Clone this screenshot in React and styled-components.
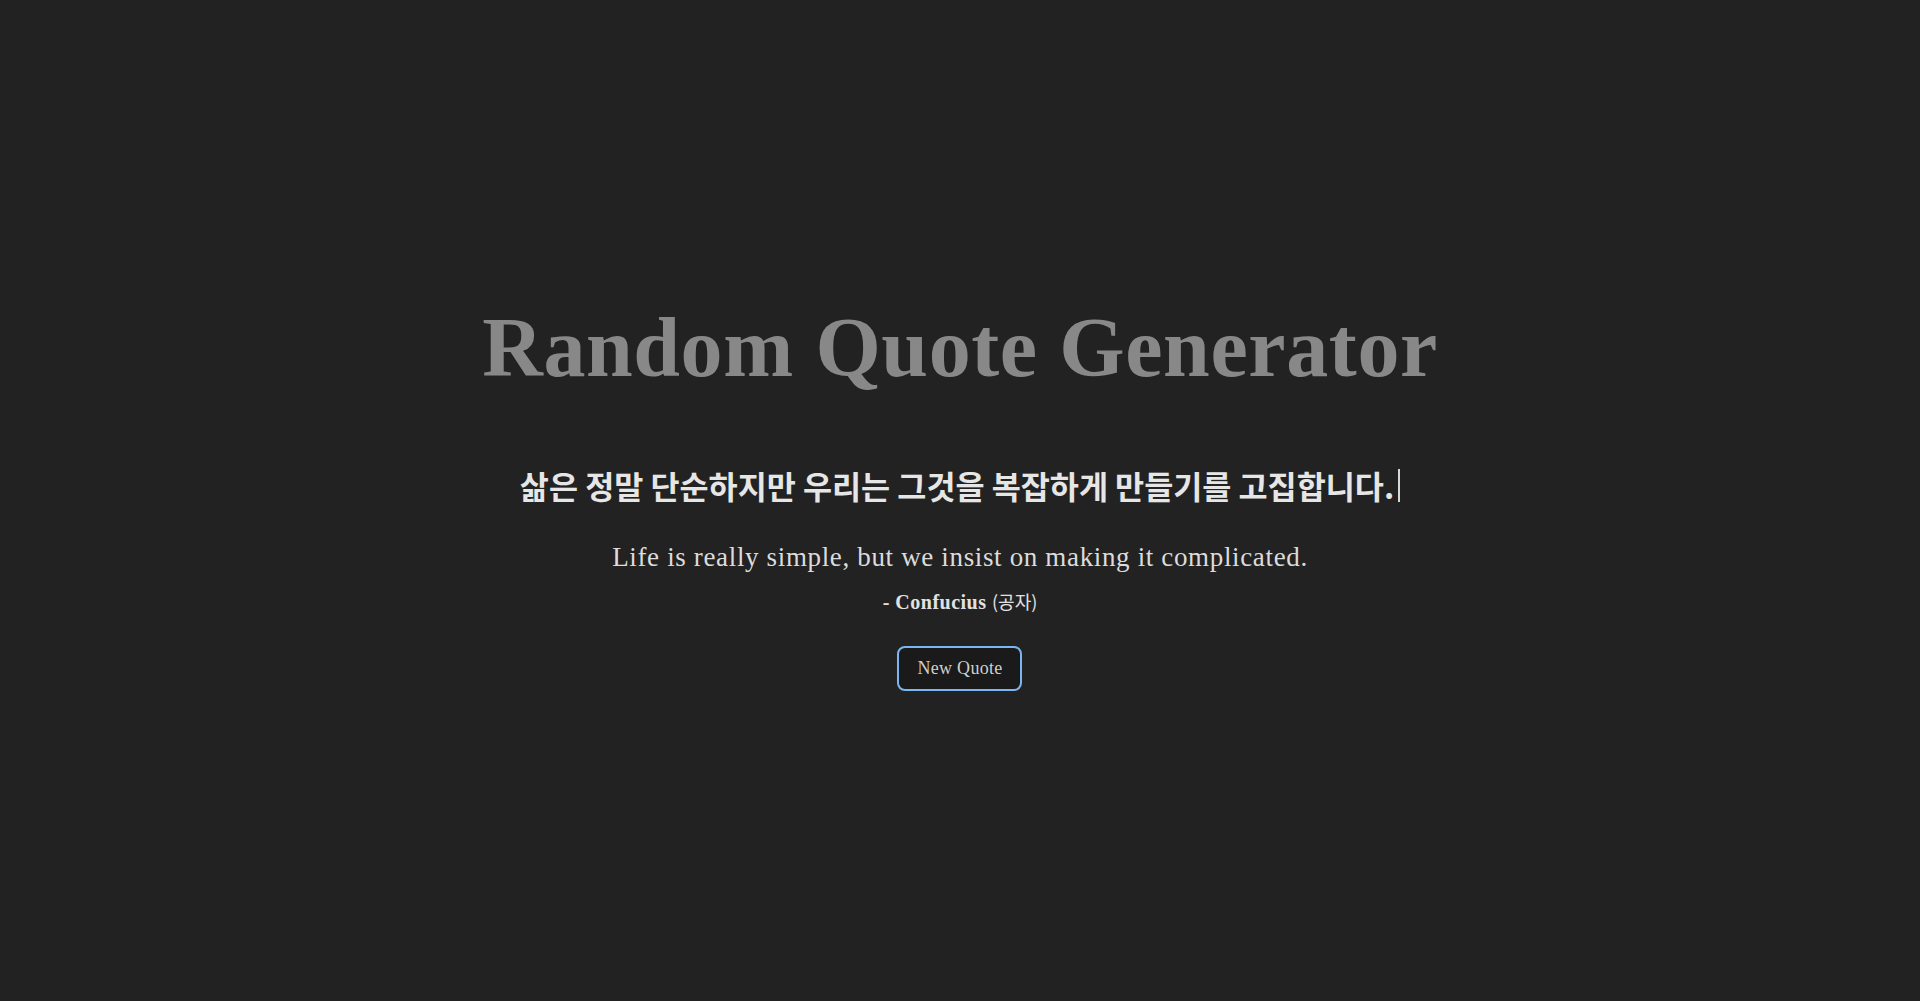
import React from "react"
import styled, { createGlobalStyle } from "styled-components"

const GlobalStyle = createGlobalStyle`
  html, body {
    margin: 0;
    padding: 0;
    background: #222222;
  }
  body {
    font-family: "Liberation Serif", "Noto Sans CJK KR", serif;
    color: rgba(255, 255, 255, 0.87);
  }
`

/**
 * Page wrapper, keeps the quote box centered on screen.
 */
const Page = styled.main`
  min-height: 100vh;
  box-sizing: border-box;
  padding-bottom: 8px;
  display: flex;
  flex-direction: column;
  align-items: center;
  justify-content: center;
  text-align: center;
`

const Title = styled.h1`
  margin: 0 0 71px;
  font-size: 84px;
  line-height: 1.1;
  font-weight: 700;
  color: #888888;
  letter-spacing: 0.6px;
`

const QuoteBox = styled.section`
  display: flex;
  flex-direction: column;
  align-items: center;
`

const Korean = styled.h2`
  margin: 0;
  font-family: "Noto Sans CJK KR", sans-serif;
  font-size: 31.6px;
  font-weight: 700;
  line-height: 40px;
  color: #e6e6e6;
  display: flex;
  align-items: center;
`

const Cursor = styled.span`
  display: inline-block;
  width: 2px;
  height: 33px;
  margin-left: 4px;
  background: #d8d8d8;
`

const English = styled.p`
  margin: 36px 0 0;
  font-size: 27px;
  line-height: 32px;
  color: #dcdcdc;
  letter-spacing: 0.65px;
`

const Author = styled.p`
  margin: 16px 0 0;
  font-size: 20px;
  font-weight: 700;
  line-height: 24px;
  color: #e2e2e2;
  letter-spacing: 0.5px;

  span {
    font-family: "Noto Sans CJK KR", sans-serif;
    font-weight: 400;
    font-size: 18px;
    letter-spacing: 0;
  }
`

const Button = styled.button`
  margin-top: 32px;
  width: 125px;
  height: 45px;
  border-radius: 8px;
  border: 2px solid #79b6f2;
  background: #1a1a1a;
  color: #cfcfcf;
  font-family: "Liberation Serif", serif;
  font-size: 18px;
  letter-spacing: 0.3px;
  cursor: pointer;
`

const App = () => {
  return (
    <Page>
      <GlobalStyle />
      <Title>Random Quote Generator</Title>
      <QuoteBox>
        <Korean>
          삶은 정말 단순하지만 우리는 그것을 복잡하게 만들기를 고집합니다.
          <Cursor />
        </Korean>
        <English>Life is really simple, but we insist on making it complicated.</English>
        <Author>
          - Confucius <span>(공자)</span>
        </Author>
        <Button>New Quote</Button>
      </QuoteBox>
    </Page>
  )
}

export default App
